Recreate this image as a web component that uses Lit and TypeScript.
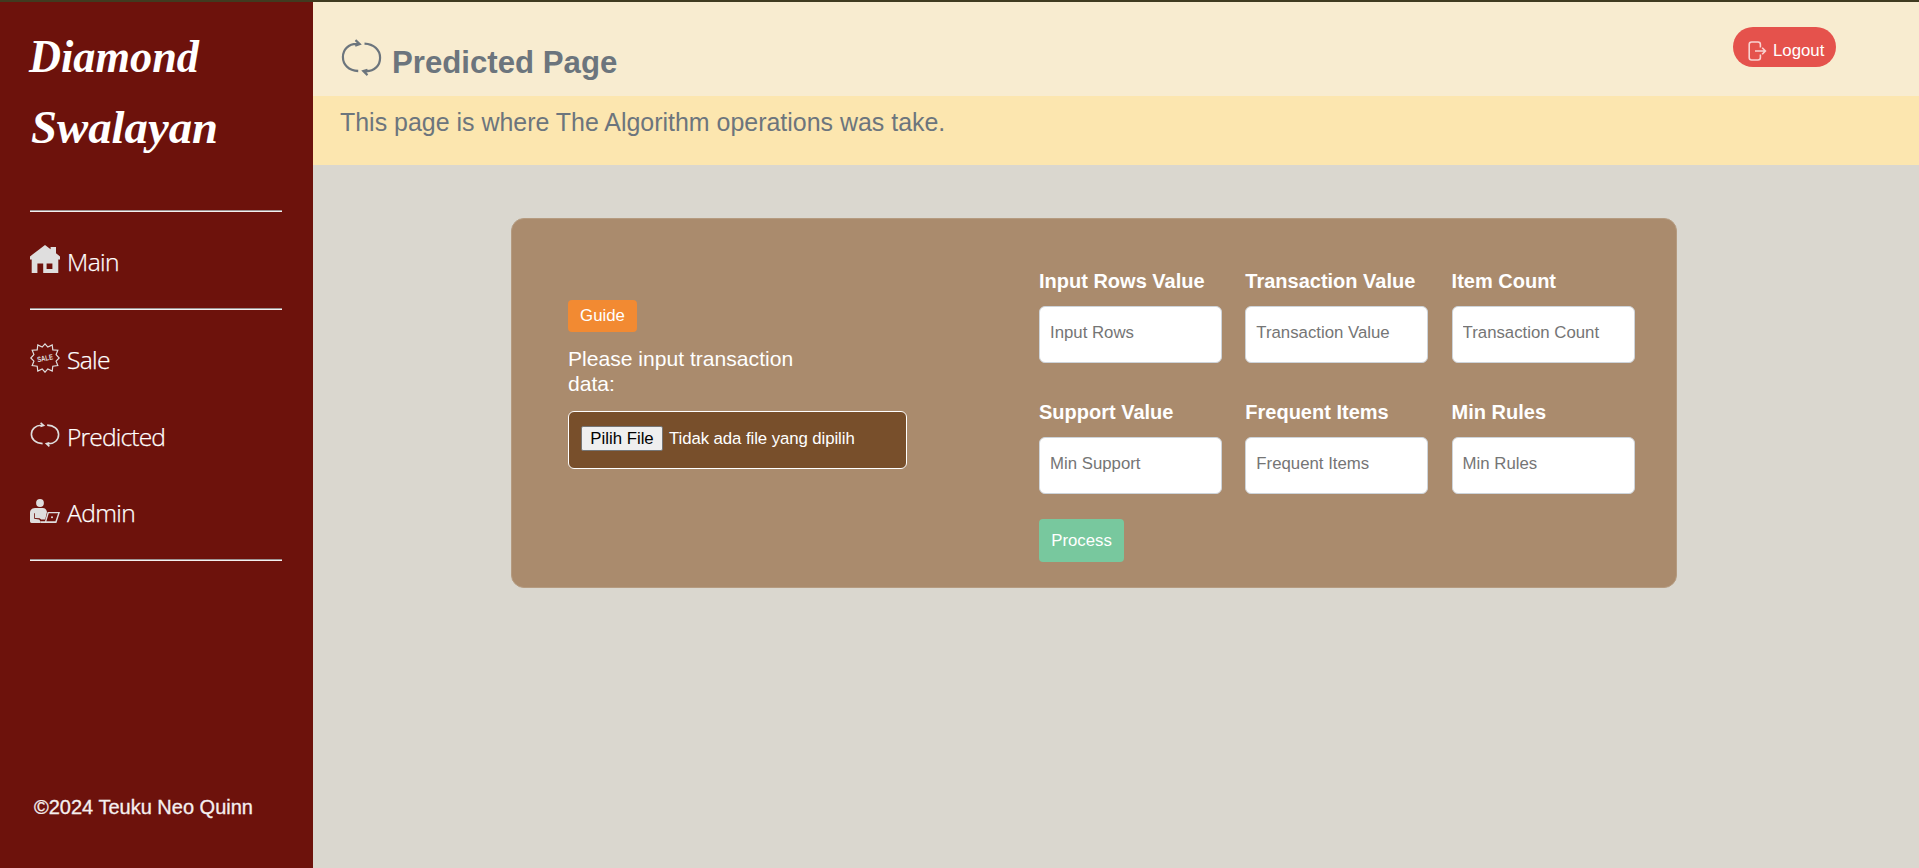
import { LitElement, html, svg, css } from "lit";
import { customElement, property } from "lit/decorators.js";

const cycle = svg`
  <path d="M12.6 21.6C5.4 21.4 1.4 17.2 1.4 12.2 1.4 7 5.6 3.3 11.4 3.3H13.4M10.6 .8 13.6 3.4 10.4 4.4" />
  <path d="M17.2 3.1C24 3.4 28.6 7.2 28.6 12.6 28.6 18 24.4 21.8 18.6 21.8H16.6M19.4 20.8 16.4 21.7 19.4 24.4" />`;

const icons: Record<string, unknown> = {
  main: html`<svg width="30" height="28" viewBox="0 0 30 28" fill="currentColor">
    <path fill-rule="evenodd" d="M15 0 20.6 4.2V2H26V8.2L30 11.4V14.4H28.3V28H13.2V18.6H7.4V28H1.7V14.4H0V11.4ZM16.6 18.5V24H22.4V18.5Z" /></svg>`,
  sale: html`<svg width="30" height="30" viewBox="0 0 30 30" fill="none" stroke="currentColor" stroke-width="1.2">
    <path d="M15 .9 17.8 4.1 22.2 2 22.8 6.9 27.8 7.2 26.1 11.6 29.2 15 26.1 18.2 27.8 22.6 22.8 23.2 22.2 28 17.8 25.9 15 29.2 12.2 25.9 7.8 28 7.2 23.2 2.2 22.6 3.9 18.2 .8 15 3.9 11.6 2.2 7.2 7.2 6.9 7.8 2 12.2 4.1Z" />
    <text x="15" y="17.8" transform="rotate(-11 15 15)" text-anchor="middle" textLength="16" lengthAdjust="spacingAndGlyphs" class="tag">SALE</text></svg>`,
  predicted: html`<svg width="30" height="25" viewBox="0 0 30 25" fill="none" stroke="currentColor" stroke-width="1.6">${cycle}</svg>`,
  admin: html`<svg width="30" height="24" viewBox="0 0 30 24" fill="currentColor">
    <circle cx="10" cy="4" r="3.9" />
    <path d="M5 9H13C15.3 9 16.6 11 17 13L15.2 20.6H11.2L9.6 19.2 5 18.9V14.2H4.2V19.8L9.2 20.4 10.6 22.6V24H1.6C.6 24 0 23.2 0 22V14C0 11 2 9 5 9Z" />
    <path fill-rule="evenodd" d="M17.6 13H30L26.4 24H10.6V22.3H15ZM18.8 14.3 16.4 22.3H25.4L28.1 14.3Z" />
    <circle cx="22" cy="18.2" r="1" /></svg>`,
};

@customElement("nav-item")
class NavItem extends LitElement {
  @property() icon = "main";
  @property() label = "";
  static styles = css`
    :host { display: flex; align-items: center; height: 36px; color: #fff; }
    .icon { box-sizing: border-box; width: 30px; height: 36px; display: flex; align-items: center; margin-right: 7px; color: #dfdede; }
    .icon.main { padding-bottom: 6px; }
    .icon.sale { padding-bottom: 4px; }
    .icon.predicted { padding-bottom: 5px; }
    .icon.admin { padding-bottom: 5px; }
    .label { font: 300 24.6px/36px "Segoe UI", "Open Sans", "Noto Sans", sans-serif; -webkit-text-stroke: 0.25px #fff; }
    .label.main { letter-spacing: -0.6px; }
    .label.sale { letter-spacing: -0.7px; }
    .label.predicted { letter-spacing: -0.85px; }
    .label.admin { letter-spacing: -0.6px; }
    .tag { font: bold 7.6px "Liberation Sans", sans-serif; fill: currentColor; stroke: none; }
  `;
  render() {
    return html`<span class="icon ${this.icon}">${icons[this.icon]}</span><span class="label ${this.icon}">${this.label}</span>`;
  }
}

@customElement("value-field")
class ValueField extends LitElement {
  @property() label = "";
  @property() hint = "";
  static styles = css`
    :host { display: block; font-family: "Liberation Sans", Arial, sans-serif; }
    label { display: block; font-size: 20px; font-weight: bold; line-height: 24px; color: #fff; white-space: nowrap; margin-bottom: 13px; }
    input { display: block; box-sizing: border-box; width: 100%; height: 57px; border: 1px solid #ced4da; border-radius: 6px;
      padding: 0 10px 3px; font: 16.8px "Liberation Sans", Arial, sans-serif; background: #fff; }
    input::placeholder { color: #757575; opacity: 1; }
  `;
  render() {
    return html`<label>${this.label}</label><input placeholder=${this.hint} />`;
  }
}

@customElement("app-root")
class AppRoot extends LitElement {
  static styles = css`
    :host { display: block; font-family: "Liberation Sans", Arial, sans-serif; }
    .page { box-sizing: border-box; height: 868px; border-top: 2px solid #403b20; display: grid; grid-template-columns: 313px 1fr; background: #dad7cf; overflow: hidden; }
    aside { background: #6d120c; padding: 18px 31px 0 30px; display: flex; flex-direction: column; box-sizing: border-box; }
    .brand { display: block; height: 190px; margin-left: -6px; overflow: visible; }
    .brand text { font: italic bold 46px "Brush Script MT", "Liberation Serif", cursive; fill: #fff; }
    .rule { height: 1px; border-top: 1px solid #9c9393; background: #f4f0f0; }
    .first { margin: 32px 0 28px; }
    .links { margin: 32px 0 28px; display: flex; flex-direction: column; gap: 40.5px; }
    footer { margin: auto 0 49px 4px; font-size: 20px; line-height: 24px; color: #f5efef; -webkit-text-stroke: 0.3px #f5efef; white-space: nowrap; }
    header { height: 94px; box-sizing: border-box; background: #f8ecd0; padding: 25px 83px 0 28px; display: flex; align-items: flex-start; justify-content: space-between; color: #6c757d; }
    h1 { margin: 0; display: flex; align-items: flex-start; gap: 10px; font-size: 31.2px; line-height: 36px; }
    h1 svg { margin-top: 12px; }
    h1 span { margin-top: 18px; }
    .logout { display: flex; align-items: center; gap: 6px; box-sizing: border-box; width: 103px; height: 40px; border: 0; border-radius: 20px; background: #e5524c;
      color: #fff; font: 16.8px/20px "Liberation Sans", Arial, sans-serif; padding: 7px 0 0 15px; }
    .lead { height: 69px; box-sizing: border-box; background: #fce6af; color: #6c757d; padding: 11px 27px; font-size: 24.95px; line-height: 30px; white-space: nowrap; }
    .card { box-sizing: border-box; width: 1166px; height: 370px; margin: 53px 0 0 198px; border: 1px solid #b59b80; border-radius: 13px; background: #aa8b6d; color: #fff;
      display: grid; grid-template-columns: 339px 596px; column-gap: 132px; padding: 0 0 0 56px; }
    .upload { padding-top: 81px; }
    .guide, .process { display: block; border: 0; border-radius: 4px; color: #fff; font: 16.8px/20px "Liberation Sans", Arial, sans-serif; padding: 0; }
    .guide { width: 69px; height: 32px; background: #f28a32; padding-bottom: 1px; }
    .prompt { margin: 14px 0 15px; width: 240px; font-size: 21.1px; line-height: 25px; }
    .file { box-sizing: border-box; height: 58px; border: 1px solid #fff; border-radius: 6px; background: #784f2b; padding: 14px 12px; display: flex; align-items: flex-start; gap: 6px; font-size: 16.8px; line-height: 23px; white-space: nowrap; }
    .pick { box-sizing: border-box; height: 25px; width: 82px; border: 1px solid #767676; border-radius: 2px; background: #efefef; color: #000; padding: 0; font: 16.8px/20px "Liberation Sans", Arial, sans-serif; white-space: nowrap; }
    .name { margin-top: 1px; letter-spacing: -0.08px; }
    .fields { display: grid; grid-template-columns: repeat(3, 183px); column-gap: 23.3px; row-gap: 37px; padding-top: 50px; }
    .process { width: 85px; height: 43px; margin-top: 25px; background: #78c89e; }
  `;
  render() {
    return html`<div class="page">
      <aside>
        <svg class="brand" width="230" height="190" viewBox="0 0 230 190">
          <text x="5" y="52" textLength="170" lengthAdjust="spacingAndGlyphs">Diamond</text>
          <text x="7" y="123" textLength="187" lengthAdjust="spacingAndGlyphs">Swalayan</text>
        </svg>
        <div class="rule"></div>
        <nav-item class="first" icon="main" label="Main"></nav-item>
        <div class="rule"></div>
        <nav class="links">
          <nav-item icon="sale" label="Sale"></nav-item>
          <nav-item icon="predicted" label="Predicted"></nav-item>
          <nav-item icon="admin" label="Admin"></nav-item>
        </nav>
        <div class="rule"></div>
        <footer>©2024 Teuku Neo Quinn</footer>
      </aside>
      <main>
        <header>
          <h1><svg width="41" height="37" viewBox="0 0 30 25" preserveAspectRatio="none" fill="none" stroke="currentColor" stroke-width="1.6">${cycle}</svg><span>Predicted Page</span></h1>
          <button class="logout">
            <svg width="19" height="20" viewBox="0 0 19 20" fill="none" stroke="#f9d3d1" stroke-width="1.6">
              <path d="M12.4 6.4V3.4Q12.4 1 10 1H3.6Q1.2 1 1.2 3.4V16.6Q1.2 19 3.6 19H10Q12.4 19 12.4 16.6V13.6M7 10H17.4M14.2 6.8 17.4 10 14.2 13.2" />
            </svg>Logout
          </button>
        </header>
        <div class="lead">This page is where The Algorithm operations was take.</div>
        <section class="card">
          <div class="upload">
            <button class="guide">Guide</button>
            <div class="prompt">Please input transaction data:</div>
            <div class="file"><button class="pick">Pilih File</button><span class="name">Tidak ada file yang dipilih</span></div>
          </div>
          <div>
            <div class="fields">
              <value-field label="Input Rows Value" hint="Input Rows"></value-field>
              <value-field label="Transaction Value" hint="Transaction Value"></value-field>
              <value-field label="Item Count" hint="Transaction Count"></value-field>
              <value-field label="Support Value" hint="Min Support"></value-field>
              <value-field label="Frequent Items" hint="Frequent Items"></value-field>
              <value-field label="Min Rules" hint="Min Rules"></value-field>
            </div>
            <button class="process">Process</button>
          </div>
        </section>
      </main>
    </div>`;
  }
}
